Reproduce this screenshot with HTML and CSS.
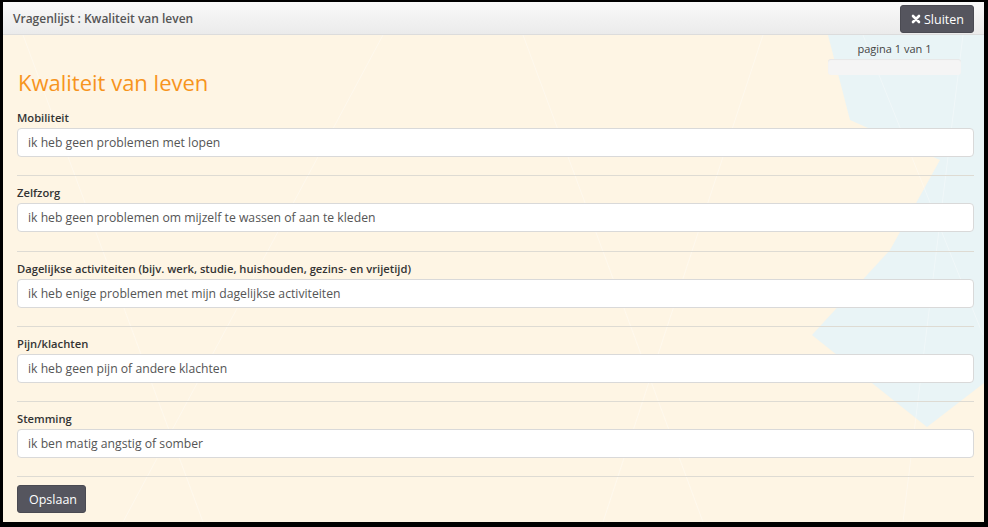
FILE: index.html
```html
<!DOCTYPE html>
<html lang="nl">
<head>
<meta charset="utf-8">
<title>Vragenlijst : Kwaliteit van leven</title>
<link rel="stylesheet" href="styles.css">
</head>
<body>
<div class="frame">
  <div class="topbar">
    <div class="topbar-title">Vragenlijst : Kwaliteit van leven</div>
    <button class="btn btn-close" type="button">
      <svg class="x-icon" viewBox="0 0 10 10" width="10" height="10" aria-hidden="true"><path d="M2 2 L8 8 M8 2 L2 8" stroke="#fff" stroke-width="2.6" stroke-linecap="round"/></svg>Sluiten
    </button>
  </div>
  <div class="content">
    <svg class="bg" viewBox="0 0 981 487" preserveAspectRatio="none" aria-hidden="true">
      <polygon points="825,0 847,85 937,125 887,215 809,300 924,392 981,348 981,0" fill="#e9f4f6"/>
      <g stroke="#ffffff" stroke-width="1" fill="none" opacity="0.35">
        <path d="M20 0 L200 487 M380 0 L120 487 M520 0 L700 487 M760 0 L600 487"/>
        <path d="M860 0 L980 300 M960 0 L900 487"/>
      </g>
    </svg>
    <div class="inner">
      <div class="head-row">
        <h1 class="page-title">Kwaliteit van leven</h1>
        <div class="pager">
          <div class="pager-text">pagina 1 van 1</div>
          <div class="pager-bar"></div>
        </div>
      </div>

      <div class="group">
        <label class="q-label">Mobiliteit</label>
        <div class="q-input">ik heb geen problemen met lopen</div>
      </div>
      <hr class="sep">
      <div class="group">
        <label class="q-label">Zelfzorg</label>
        <div class="q-input">ik heb geen problemen om mijzelf te wassen of aan te kleden</div>
      </div>
      <hr class="sep">
      <div class="group">
        <label class="q-label">Dagelijkse activiteiten (bijv. werk, studie, huishouden, gezins- en vrijetijd)</label>
        <div class="q-input">ik heb enige problemen met mijn dagelijkse activiteiten</div>
      </div>
      <hr class="sep">
      <div class="group">
        <label class="q-label">Pijn/klachten</label>
        <div class="q-input">ik heb geen pijn of andere klachten</div>
      </div>
      <hr class="sep">
      <div class="group">
        <label class="q-label">Stemming</label>
        <div class="q-input">ik ben matig angstig of somber</div>
      </div>
      <hr class="sep sep-last">
      <button class="btn btn-save" type="button">Opslaan</button>
    </div>
  </div>
</div>
</body>
</html>
```
FILE: styles.css
```css
* { box-sizing: border-box; }
html, body { margin: 0; padding: 0; }
body {
  width: 988px;
  height: 527px;
  background: #000;
  font-family: "Open Sans", "Noto Sans", sans-serif;
  overflow: hidden;
}
.frame {
  width: 988px;
  height: 527px;
  border-style: solid;
  border-color: #000;
  border-width: 2px 4px 5px 3px;
  background: #fef5e4;
  display: flex;
  flex-direction: column;
}
.topbar {
  height: 33px;
  flex: none;
  background: linear-gradient(#f9f9f9, #ebebeb);
  border-bottom: 1px solid #dcdcdc;
  display: flex;
  align-items: center;
  justify-content: space-between;
  padding: 0 10px 0 10px;
}
.topbar-title {
  font-size: 12px;
  font-weight: 600;
  color: #555;
}
.btn {
  font-family: "Open Sans", "Noto Sans", sans-serif;
  background: #55555e;
  color: #fff;
  border: 1px solid #4a4a52;
  border-radius: 3px;
  font-size: 12.5px;
  height: 28px;
  padding: 0 10px;
  display: inline-flex;
  align-items: center;
  cursor: pointer;
}
.btn-close {
  width: 74px;
  padding: 0 0 0 10px;
  margin-top: 2px;
}
.x-icon { margin-right: 3px; }
.content {
  position: relative;
  flex: 1;
}
.bg {
  position: absolute;
  left: 0;
  top: 0;
  width: 100%;
  height: 100%;
}
.inner {
  position: relative;
  padding: 7px 10px 0 14px;
}
.head-row {
  display: flex;
  justify-content: space-between;
  align-items: flex-start;
}
.page-title {
  margin: 27px 0 0 1px;
  font-size: 22px;
  line-height: 26px;
  font-weight: 400;
  color: #f7941d;
}
.pager {
  width: 133px;
  margin-right: 13px;
  text-align: center;
}
.pager-text {
  font-size: 11px;
  line-height: 14px;
  color: #444;
}
.pager-bar {
  margin-top: 3px;
  height: 16px;
  background: #f5f5f5;
  border-radius: 3px;
  box-shadow: inset 0 1px 1px rgba(0,0,0,0.06);
}
.group { display: flex; flex-direction: column; }
.head-row + .group { margin-top: 15px; }
.q-label {
  display: block;
  font-size: 11.2px;
  font-weight: 600;
  line-height: 16px;
  color: #333;
  margin-bottom: 2px;
}
.q-input {
  height: 29px;
  background: #fff;
  border: 1px solid #d9d9d9;
  border-radius: 4px;
  padding: 0 10px;
  font-size: 12.2px;
  line-height: 27px;
  color: #555;
}
.sep {
  border: 0;
  border-top: 1px solid #dedbd3;
  margin: 18.3px 0 9px 0;
}
.sep-last { margin-bottom: 8px; }
.btn-save {
  width: 69px;
  padding: 0 0 0 11px;
}
```
